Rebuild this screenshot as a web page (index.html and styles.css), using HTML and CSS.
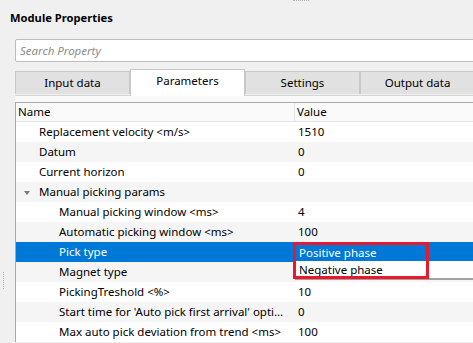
FILE: index.html
```html
<!DOCTYPE html>
<html lang="en">
<head>
  <meta charset="UTF-8">
  <title>Module Properties</title>
  <link rel="stylesheet" href="styles.css">
</head>
<body>
  <div class="grip-top"></div>
  <div class="grip-left"></div>

  <div class="panel">
    <h1 class="title">Module Properties</h1>

    <div class="search">
      <input type="text" placeholder="Search Property">
    </div>

    <!-- Tabs -->
    <div class="tabs">
      <div class="tab">Input data</div>
      <div class="tab active">Parameters</div>
      <div class="tab">Settings</div>
      <div class="tab">Output data</div>
    </div>

    <div class="pane">
      <div class="grid">
        <div class="row head">
          <div class="cell name">Name</div>
          <div class="cell value">Value</div>
        </div>
        <div class="row">
          <div class="cell name l1">Replacement velocity &lt;m/s&gt;</div>
          <div class="cell value">1510</div>
        </div>
        <div class="row alt">
          <div class="cell name l1">Datum</div>
          <div class="cell value">0</div>
        </div>
        <div class="row">
          <div class="cell name l1">Current horizon</div>
          <div class="cell value">0</div>
        </div>
        <div class="row alt">
          <div class="cell name l1"><span class="arrow"></span>Manual picking params</div>
          <div class="cell value"></div>
        </div>
        <div class="row">
          <div class="cell name l2">Manual picking window &lt;ms&gt;</div>
          <div class="cell value">4</div>
        </div>
        <div class="row alt">
          <div class="cell name l2">Automatic picking window &lt;ms&gt;</div>
          <div class="cell value">100</div>
        </div>
        <div class="row selected">
          <div class="cell name l2">Pick type</div>
          <div class="cell value">
            <div class="popup">
              <div class="option hover">Positive phase</div>
              <div class="option">Negative phase</div>
            </div>
            <div class="mark"></div>
          </div>
        </div>
        <div class="row alt">
          <div class="cell name l2">Magnet type</div>
          <div class="cell value"></div>
        </div>
        <div class="row">
          <div class="cell name l2">PickingTreshold &lt;%&gt;</div>
          <div class="cell value">10</div>
        </div>
        <div class="row alt">
          <div class="cell name l2">Start time for 'Auto pick first arrival' optio...</div>
          <div class="cell value">0</div>
        </div>
        <div class="row">
          <div class="cell name l2">Max auto pick deviation from trend &lt;ms&gt;</div>
          <div class="cell value">100</div>
        </div>
      </div>
    </div>
  </div>
</body>
</html>
```

FILE: styles.css
```css
/* General */
body {
  margin: 0;
  background: #f0f0f0;
  font-family: 'Noto Sans', 'Open Sans', sans-serif;
  font-size: 11.5px;
  color: #000;
  width: 473px;
  height: 343px;
  overflow: hidden;
  position: relative;
}

.grip-top {
  position: absolute;
  top: 0;
  left: 293px;
  width: 16px;
  border-top: 1px dotted #b0b0b0;
}

.grip-left {
  position: absolute;
  top: 272px;
  left: 3px;
  height: 17px;
  border-left: 1px dotted #b0b0b0;
}

.panel {
  padding: 9px 0 0 10px;
}

.title {
  margin: 0;
  font-size: 11.2px;
  font-weight: 700;
  line-height: 18px;
}

/* Search */
.search {
  margin: 12px 0 0 5px;
  width: 470px;
  height: 21px;
  background: #fff;
  border: 1px solid #bdbdbd;
  border-radius: 2px;
}

.search input {
  border: none;
  outline: none;
  background: transparent;
  width: 100%;
  height: 21px;
  padding: 0 4px;
  box-sizing: border-box;
  font-family: inherit;
  font-size: 11.5px;
  font-style: italic;
}

.search input::placeholder {
  color: #8c8c8c;
}

/* Tabs */
.tabs {
  display: flex;
  align-items: flex-end;
  margin: 7px 0 0 5px;
  height: 26px;
}

.tab {
  width: 113px;
  height: 22px;
  line-height: 22px;
  text-align: center;
  background: #e1e1e1;
  border: 1px solid #c8c8c8;
  border-bottom: none;
  margin-bottom: 1px;
  flex: none;
}

.tab.active {
  background: #fff;
  height: 26px;
  line-height: 22px;
  margin-bottom: -1px;
  position: relative;
  z-index: 1;
}

.pane {
  margin-left: 5px;
  border-top: 1px solid #d6d6d6;
  background: #f9f9f9;
  padding-top: 6px;
}

/* Property grid */
.grid {
  background: #fff;
  border-top: 1px solid #a9a9a9;
  border-left: 1px solid #a9a9a9;
  width: 470px;
}

.row {
  display: grid;
  grid-template-columns: 278px 1fr;
  height: 20px;
  line-height: 20px;
  white-space: nowrap;
}

.row.alt {
  background: #f5f5f5;
}

.row.head {
  background: #fafafa;
  border-bottom: 1px solid #e3e3e3;
  height: 18px;
  line-height: 18px;
}

.row.head .name {
  padding-left: 2px;
}

.row.head .value {
  border-left: 1px solid #e3e3e3;
  padding-left: 2px;
}

.cell {
  overflow: hidden;
  text-overflow: ellipsis;
}

.name {
  padding-right: 4px;
}

.value {
  padding-left: 4px;
  position: relative;
  overflow: visible;
}

.l1 {
  padding-left: 23px;
  position: relative;
}

.l2 {
  padding-left: 43px;
}

.arrow {
  position: absolute;
  left: 8px;
  top: 9px;
  border-left: 3px solid transparent;
  border-right: 3px solid transparent;
  border-top: 4px solid #7a7a7a;
}

.row.selected {
  background: #0078d7;
  color: #fff;
}

/* Dropdown popup */
.popup {
  position: absolute;
  left: 1px;
  top: 2px;
  width: 200px;
  background: #fff;
  color: #000;
  box-shadow: 0 2px 0 #a0a0a0;
  z-index: 2;
}

.option {
  height: 17px;
  line-height: 17px;
  padding-left: 4px;
}

.option.hover {
  background: #0078d7;
  color: #fff;
}

.mark {
  position: absolute;
  left: -1px;
  top: 0;
  width: 130px;
  height: 31px;
  border: 3px solid #e8192c;
  z-index: 3;
}
```
